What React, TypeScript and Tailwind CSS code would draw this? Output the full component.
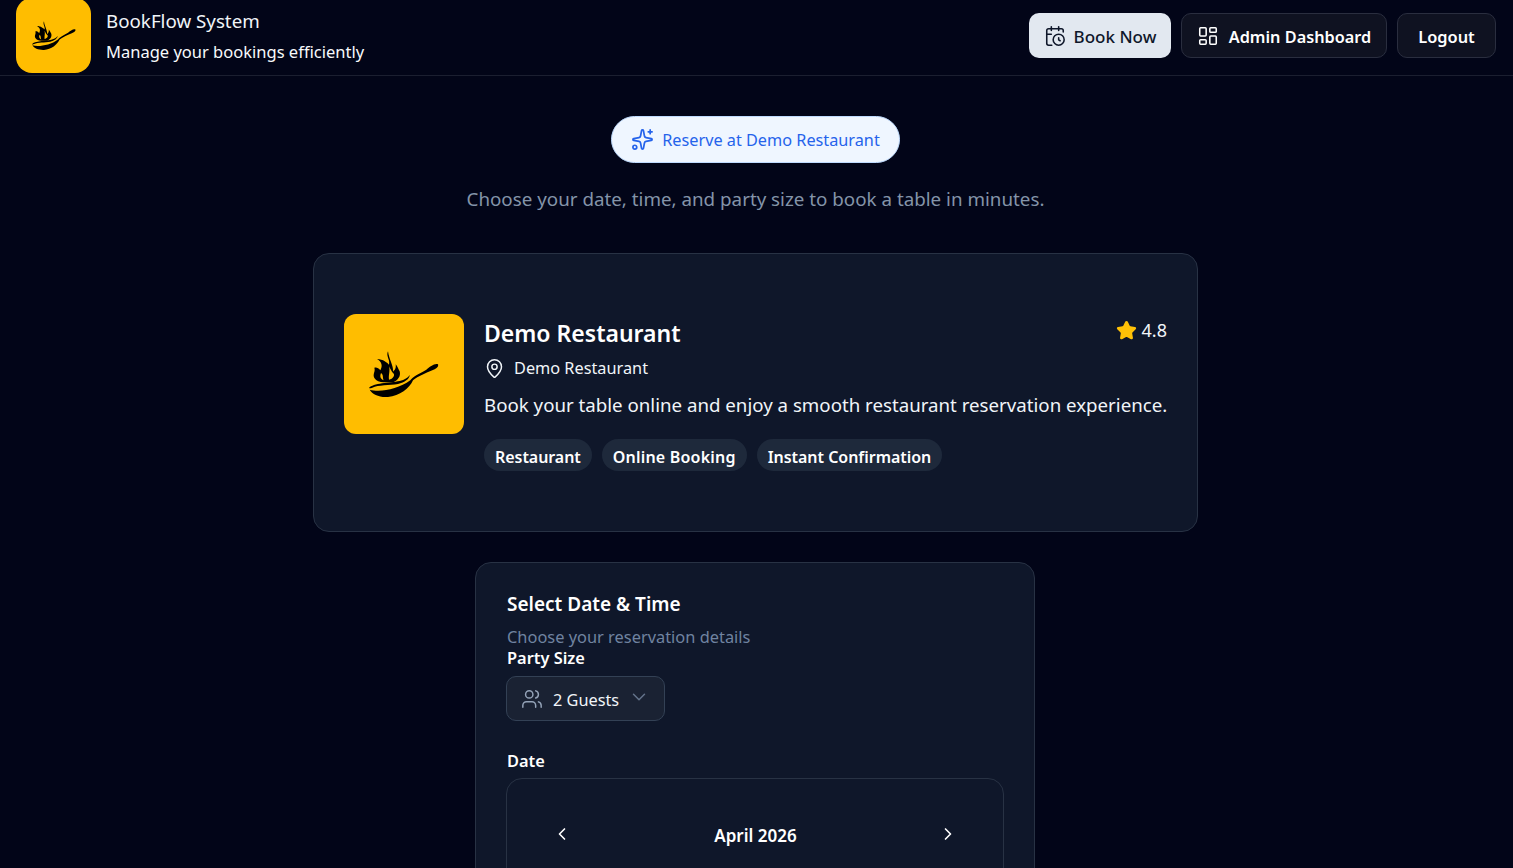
import { CalendarClock, ChevronDown, ChevronLeft, ChevronRight, LayoutDashboard, MapPin, Sparkles, Star, Users } from "lucide-react";

function PanLogo({ width }: { width: number }) {
  return (
    <svg width={width} height={(width * 140) / 210} viewBox="28 34 210 140" fill="#000" aria-hidden="true">
      <path
        fillRule="evenodd"
        d="M85 35C78 50 92 60 88 75C84 70 70 58 52 58C66 66 70 78 62 92C56 84 50 82 44 84C48 96 38 102 44 115C50 124 60 128 72 128L100 128C115 122 124 110 120 95C116 88 113 80 108 74C110 88 104 92 100 96C102 78 88 60 85 35ZM64 100C60 110 62 118 72 122C68 112 72 106 64 100ZM88 80C92 95 86 105 88 120C100 118 108 106 100 100C96 96 92 88 88 80Z"
      />
      <path d="M28 145C40 130 90 130 120 124C135 120 145 114 150 106C150 118 135 128 115 133C90 138 55 135 38 144C33 146 30 147 28 145Z" />
      <path d="M30 150C60 158 115 150 152 122C158 112 175 104 200 90C210 82 225 70 235 74C238 80 230 88 218 92C200 100 175 110 160 122C150 145 120 170 85 172C60 173 38 165 30 150Z" />
    </svg>
  );
}

const tags = [
  { label: "Restaurant", spacing: "tracking-[-0.05px]" },
  { label: "Online Booking", spacing: "tracking-[0.2px]" },
  { label: "Instant Confirmation", spacing: "tracking-[-0.03px]" },
];

export default function App() {
  return (
    <div className="min-h-screen overflow-hidden bg-[#020518] font-['Noto_Sans','Open_Sans',sans-serif] text-white">
      <header className="flex h-[76px] items-start justify-between border-b border-[#1b1f30] pl-4 pr-[17px]">
        <div className="flex items-start gap-[15px]">
          <div className="-mt-0.5 flex h-[75px] w-[75px] items-center justify-center rounded-2xl bg-[#ffbd00]">
            <PanLogo width={44} />
          </div>
          <div className="pt-[7px]">
            <div className="text-[18.75px] leading-[28px] text-[#f1f5f9]">BookFlow System</div>
            <div className="mt-[3px] text-[16.5px] leading-[28px] text-[#f8fafc]">Manage your bookings efficiently</div>
          </div>
        </div>
        <div className="mt-[13px] flex gap-[10px]">
          <button className="flex h-[45px] w-[142px] items-center justify-center gap-2 rounded-[10px] bg-[#e2e8f0] text-[17px] font-medium text-[#0f172a]">
            <CalendarClock size={22} strokeWidth={1.7} />
            <span className="pt-0.5">Book Now</span>
          </button>
          <button className="flex h-[45px] w-[206px] items-center justify-center gap-[10px] rounded-[10px] border border-[#2a2e3f] bg-[#0f1221] text-[16.3px] font-semibold">
            <LayoutDashboard size={22} strokeWidth={1.7} />
            <span className="pt-[3px]">Admin Dashboard</span>
          </button>
          <button className="h-[45px] w-[99px] rounded-[10px] border border-[#2a2e3f] bg-[#0f1221] pt-[3px] text-[16.4px] font-semibold">Logout</button>
        </div>
      </header>

      <main className="flex flex-col items-center pr-[2px] pt-10">
        <div className="flex h-[47px] w-[289px] items-center justify-center gap-2 rounded-full border border-[#bfdbfe] bg-[#eff6ff] text-[16.25px] text-[#2563eb]">
          <Sparkles size={23} strokeWidth={1.8} />
          <span className="pt-0.5">Reserve at Demo Restaurant</span>
        </div>
        <p className="mt-[22px] text-[18.8px] leading-[28px] text-[#8494a9]">Choose your date, time, and party size to book a table in minutes.</p>

        <section className="mt-[40px] flex w-[885px] items-start gap-5 rounded-2xl border border-[#283244] bg-[#0f172a] px-[30px] py-[60px]">
          <div className="flex h-[120px] w-[120px] shrink-0 items-center justify-center rounded-xl bg-[#ffbd00]">
            <PanLogo width={70} />
          </div>
          <div className="min-w-0 flex-1">
            <div className="flex items-start justify-between">
              <h2 className="text-[23px] font-semibold leading-[38px]">Demo Restaurant</h2>
              <div className="flex items-center gap-[5px] text-[18px] leading-[32px] text-[#f1f5f9]">
                <Star size={21} fill="#ffc107" stroke="#ffc107" />
                4.8
              </div>
            </div>
            <div className="mt-[4px] flex h-6 items-center gap-[9px] text-[16.3px] leading-[24px] text-[#f1f5f9]">
              <MapPin size={21} strokeWidth={1.7} />
              <span className="-mt-px">Demo Restaurant</span>
            </div>
            <p className="mt-[13px] whitespace-nowrap text-[18.7px] leading-[24px] text-[#f1f5f9]">Book your table online and enjoy a smooth restaurant reservation experience.</p>
            <div className="mt-[22px] flex gap-[10px]">
              {tags.map((t) => (
                <span key={t.label} className={`flex h-8 items-center rounded-full bg-[#1e293b] px-[11px] pt-1 text-[16px] font-semibold ${t.spacing}`}>{t.label}</span>
              ))}
            </div>
          </div>
        </section>

        <section className="mr-px mt-[30px] h-[600px] w-[560px] rounded-2xl border border-[#283244] bg-[#0f172a] px-[30px] pt-[27px]">
          <h3 className="pl-px text-[19px] font-semibold leading-[28px]">Select Date &amp; Time</h3>
          <p className="mt-[7px] pl-px text-[16.4px] leading-[24px] text-[#7083a0]">Choose your reservation details</p>
          <div className="pl-px text-[16.4px] font-semibold leading-[18px]">Party Size</div>
          <button className="mt-[9px] flex h-[45px] w-[159px] items-center rounded-[10px] border border-[#334155] bg-[#1a2233] pl-[14px] text-[16.3px] text-[#f1f5f9]">
            <Users size={22} strokeWidth={1.6} className="text-[#94a3b8]" />
            <span className="ml-[10px] pt-[3px]">2 Guests</span>
            <ChevronDown size={22} strokeWidth={1.6} className="-mt-[3px] ml-[9px] text-[#64748b]" />
          </button>
          <div className="mt-[30px] pl-px text-[16.4px] font-semibold leading-[20px]">Date</div>
          <div className="mt-[7px] h-[300px] w-[498px] rounded-2xl border border-[#283244] px-[45px] pt-[44px]">
            <div className="flex items-center justify-between">
              <ChevronLeft size={20} className="-mt-[4px]" />
              <span className="pl-px text-[17px] font-semibold">April 2026</span>
              <ChevronRight size={20} className="-mt-[4px]" />
            </div>
          </div>
        </section>
      </main>
    </div>
  );
}
